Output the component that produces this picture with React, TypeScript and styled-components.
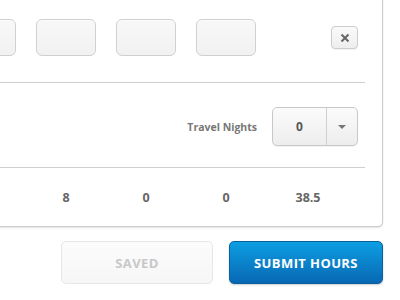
import React from 'react';
import styled, { createGlobalStyle } from 'styled-components';

const GlobalStyle = createGlobalStyle`
  html, body {
    margin: 0;
    padding: 0;
    background: #ffffff;
    overflow: hidden;
  }
  body {
    font-family: "Open Sans", "Liberation Sans", sans-serif;
  }
`;

const Page = styled.div`
  width: 400px;
  height: 300px;
  overflow: hidden;
`;

const Card = styled.div`
  box-sizing: border-box;
  width: 445px;
  margin: -20px 0 0 -62px;
  padding: 0 17px;
  background: #ffffff;
  border: 1px solid #cccccc;
  border-radius: 0 0 5px 0;
  box-shadow: 0 1px 2px rgba(0, 0, 0, 0.12);
`;

const Section = styled.div<{ $top: number; $bottom: number; $last?: boolean }>`
  display: flex;
  align-items: center;
  padding: ${p => p.$top}px 0 ${p => p.$bottom}px;
  border-bottom: ${p => (p.$last ? 'none' : '1px solid #cfcfcf')};
`;

const Cells = styled.div`
  display: flex;
  align-items: center;
  gap: 20px;
`;

const HourBox = styled.div`
  box-sizing: border-box;
  width: 60px;
  height: 37px;
  border: 1px solid #d0d0d0;
  border-radius: 6px;
  background: linear-gradient(#f8f8f8, #f1f1f1);
  box-shadow: inset 0 1px 1px rgba(255, 255, 255, 0.8);
`;

const Spacer = styled.div`
  flex: 1;
`;

const CloseButton = styled.button`
  box-sizing: border-box;
  width: 27px;
  height: 23px;
  margin-right: 7px;
  padding: 0;
  display: flex;
  align-items: center;
  justify-content: center;
  border: 1px solid #cccccc;
  border-radius: 4px;
  background: linear-gradient(#fafafa, #eeeeee);
  box-shadow: 0 1px 1px rgba(0, 0, 0, 0.06);
`;

const Label = styled.span`
  font-size: 10.5px;
  font-weight: 700;
  color: #777777;
  margin-right: 15px;
`;

const Select = styled.div`
  box-sizing: border-box;
  width: 86px;
  height: 39px;
  margin-right: 7px;
  display: flex;
  border: 1px solid #c8c8c8;
  border-radius: 5px;
  background: linear-gradient(#fbfbfb, #ededed);
  box-shadow: 0 1px 1px rgba(0, 0, 0, 0.05);
`;

const SelectValue = styled.div`
  width: 53px;
  display: flex;
  align-items: center;
  justify-content: center;
  border-right: 1px solid #cfcfcf;
  font-size: 12px;
  font-weight: 700;
  color: #555555;
`;

const SelectArrow = styled.div`
  flex: 1;
  display: flex;
  align-items: center;
  justify-content: center;
  &::after {
    content: '';
    border-left: 4px solid transparent;
    border-right: 4px solid transparent;
    border-top: 4px solid #777777;
  }
`;

const Total = styled.div<{ $width: number }>`
  width: ${p => p.$width}px;
  text-align: center;
  font-size: 12.5px;
  font-weight: 700;
  color: #666666;
`;

const Footer = styled.div`
  width: 383px;
  margin-top: 14px;
  display: flex;
  justify-content: flex-end;
  gap: 16px;
`;

const ActionButton = styled.button<{ $primary?: boolean; $width: number }>`
  box-sizing: border-box;
  width: ${p => p.$width}px;
  height: 43px;
  border-radius: 5px;
  font-family: "Open Sans", "Liberation Sans", sans-serif;
  font-size: 13px;
  font-weight: 700;
  letter-spacing: 0.4px;
  border: 1px solid ${p => (p.$primary ? '#0a5f9f' : '#e6e6e6')};
  color: ${p => (p.$primary ? '#ffffff' : '#c8c8c8')};
  background: ${p =>
    p.$primary ? 'linear-gradient(#0d9ee2, #0868b4)' : 'linear-gradient(#fcfcfc, #f6f6f6)'};
  box-shadow: ${p => (p.$primary ? '0 1px 2px rgba(0, 0, 0, 0.2)' : 'none')};
`;

const CloseIcon = () => (
  <svg width="10" height="10" viewBox="0 0 10 10">
    <path d="M1.5 1.5 L8.5 8.5 M8.5 1.5 L1.5 8.5" stroke="#666666" strokeWidth="2" />
  </svg>
);

const days = ['8', '0', '0'];

const App = () => {
  return (
    <Page>
      <GlobalStyle />
      <Card>
        <Section $top={38} $bottom={26}>
          <Cells>
            <HourBox />
            <HourBox />
            <HourBox />
            <HourBox />
          </Cells>
          <Spacer />
          <CloseButton aria-label="Remove">
            <CloseIcon />
          </CloseButton>
        </Section>
        <Section $top={24} $bottom={21}>
          <Spacer />
          <Label>Travel Nights</Label>
          <Select>
            <SelectValue>0</SelectValue>
            <SelectArrow />
          </Select>
        </Section>
        <Section $top={21} $bottom={20} $last>
          <Cells>
            <Total $width={60} />
            {days.map((d, i) => (
              <Total key={i} $width={60}>{d}</Total>
            ))}
            <Total $width={64}>38.5</Total>
          </Cells>
        </Section>
      </Card>
      <Footer>
        <ActionButton $width={152}>SAVED</ActionButton>
        <ActionButton $width={154} $primary>SUBMIT HOURS</ActionButton>
      </Footer>
    </Page>
  );
};

export default App;
